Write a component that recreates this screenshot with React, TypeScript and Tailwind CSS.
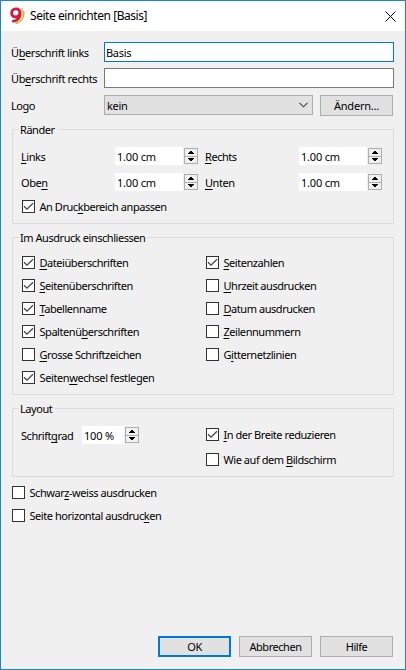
import React from "react";

/** Label whose access key is marked with an ampersand, e.g. "&Links". */
function Key({ text, className = "" }: { text: string; className?: string }) {
  const at = text.indexOf("&");
  if (at < 0) return <span className={"whitespace-pre " + className}>{text}</span>;
  return (
    <span className={"whitespace-pre " + className}>
      {text.slice(0, at)}
      <span className="underline decoration-1 underline-offset-2 [text-decoration-skip-ink:none]">{text[at + 1]}</span>
      {text.slice(at + 2)}
    </span>
  );
}

function Check({ text, on = false, className = "" }: { text: string; on?: boolean; className?: string }) {
  return (
    <label className="flex h-[13px] items-center gap-[4.5px]">
      <span className="flex h-[13px] w-[13px] shrink-0 border border-[#333] bg-white">
        {on && (
          <svg width="11" height="11" viewBox="0 0 11 11" fill="none" stroke="#444" strokeWidth="1.3">
            <path d="M1 5.2 L4 8.2 L10 2.2" />
          </svg>
        )}
      </span>
      <Key text={text} className={className} />
    </label>
  );
}

function Spin({ value, narrow = false }: { value: string; narrow?: boolean }) {
  return (
    <div className="flex h-[18px] items-center gap-px">
      <div className={"flex h-[18px] items-center bg-white pt-px pl-[2px] " + (narrow ? "w-[42px]" : "w-[68px]")}>
        <span className="whitespace-pre tracking-[-0.2px]">{value}</span>
      </div>
      <svg width="14" height="16" viewBox="0 0 14 16" shapeRendering="crispEdges">
        <rect width="14" height="16" fill="#adadad" />
        <rect x="1" y="1" width="12" height="7" fill="#f0f0f0" />
        <rect x="1" y="9" width="12" height="6" fill="#f0f0f0" />
        <path d="M6 3h2v1h1v1h1v1H4V5h1V4h1z M4 10h6v1H9v1H8v1H6v-1H5v-1H4z" fill="#000" />
      </svg>
    </div>
  );
}

function Group({ title, className, children }: { title: string; className: string; children: React.ReactNode }) {
  return (
    <section className={"ml-[11px] w-[382px] border border-[#dcdcdc] " + className}>
      <div className="-mt-[8px] ml-[6px] flex h-4 w-fit items-center bg-[#f0f0f0] pl-px pr-[3px]">
        <span>{title}</span>
      </div>
      {children}
    </section>
  );
}

function Button({ text, primary = false, className = "" }: { text: string; primary?: boolean; className?: string }) {
  return (
    <button
      className={
        "flex h-[21px] w-[73px] shrink-0 items-center justify-center bg-[#e1e1e1] " +
        (primary ? "border-2 border-[#0078d7] " : "border border-[#adadad] ") +
        className
      }
    >
      {text}
    </button>
  );
}

export default function App() {
  return (
    <main className="flex h-[670px] w-[406px] flex-col overflow-hidden border border-[#1883d7] bg-[#f0f0f0] font-['Noto_Sans',sans-serif] text-[11px] leading-4 tracking-[-0.45px] text-black">
      <header className="flex h-[30px] shrink-0 items-center bg-white pl-[8px] pr-[9px]">
        <svg width="17" height="18" viewBox="0 0 17 18" fill="none">
          <path d="M12.8 1c4.700 6 1.600 14-6.300 15.500C10.500 13.500 13 8 12.800 1z" fill="#f0dc8c" stroke="#e3c964" strokeWidth="1" />
          <path d="M14.600 4c1.200 5.500-2.200 11.300-7.600 12.600" stroke="#c9a941" strokeWidth="1" />
          <path d="M10.900 6c-.4 2.700-2 3.900-4.400 3.900-2.400 0-3.900-1.400-3.900-3.700 0-2.600 1.700-4.300 4.300-4.300 2.700 0 4.100 1.800 4.100 4.300 0 4.700-2.700 8-7.800 8.100" stroke="#d71940" strokeWidth="2.8" />
        </svg>
        <span className="ml-1 flex-1 text-[12px]">Seite einrichten [Basis]</span>
        <svg width="11" height="11" viewBox="0 0 11 11" stroke="#000" strokeWidth="1">
          <path d="M.5.5l10 10M10.5.5l-10 10" />
        </svg>
      </header>

      <div className="mt-[11px] flex h-5 items-center pl-[10px]">
        <Key text="Ü&berschrift links" className="mt-0.5 w-[93px] tracking-[-0.4px]" />
        <div className="flex h-5 w-[290px] items-center border border-[#0078d7] bg-white pl-px pt-0.5 tracking-[-0.3px]">Basis</div>
      </div>
      <div className="mt-[6px] flex h-5 items-center pl-[10px]">
        <Key text="Üb&erschrift rechts" className="mt-0.5 w-[93px] tracking-[-0.36px]" />
        <div className="h-5 w-[290px] border border-[#7a7a7a] bg-white" />
      </div>
      <div className="mt-[7px] flex h-[21px] items-start pl-[10px]">
        <span className="mt-[3px] w-[93px]">Logo</span>
        <div className="mr-[7px] flex h-5 w-[209px] items-center justify-between border border-[#adadad] bg-[#e1e1e1] pl-[2px] pr-[4px]">
          <span className="mt-0.5 tracking-[-0.3px]">kein</span>
          <svg width="9" height="6" viewBox="0 0 9 6" fill="none" stroke="#444" strokeWidth="1.1">
            <path d="M.5.8l4 4 4-4" />
          </svg>
        </div>
        <Button text="Ändern..." className="tracking-[-0.2px]" />
      </div>

      <Group title="Ränder" className="mt-[13px] h-[95px]">
        <div className="mt-[9px] grid grid-cols-[94px_90px_94px_auto] gap-y-2 pl-[8px]">
          <Key text="&Links" className="mt-0.5" />
          <Spin value="1.00 cm" />
          <Key text="&Rechts" className="mt-0.5" />
          <Spin value="1.00 cm" />
          <Key text="Obe&n" className="mt-0.5" />
          <Spin value="1.00 cm" />
          <Key text="&Unten" className="mt-0.5" />
          <Spin value="1.00 cm" />
        </div>
        <div className="mt-[9px] pl-[9px]">
          <Check on text="An Druc&kbereich anpassen" />
        </div>
      </Group>

      <Group title="Im Ausdruck einschliessen" className="mt-[13px] h-[158px]">
        <div className="mt-[10px] grid grid-flow-col grid-cols-[184px_auto] grid-rows-6 gap-y-[10px] pl-[9px]">
          <Check on text="&Dateiüberschriften" />
          <Check on text="&Seitenüberschriften" />
          <Check on text="&Tabellenname" />
          <Check on text="Spaltenü&berschriften" />
          <Check text="&Grosse Schriftzeichen" />
          <Check on text="Seiten&wechsel festlegen" className="tracking-[-0.4px]" />
          <Check on text="&Seitenzahlen" />
          <Check text="&Uhrzeit ausdrucken" />
          <Check text="&Datum ausdrucken" />
          <Check text="&Zeilennummern" />
          <Check text="G&itternetzlinien" />
        </div>
      </Group>

      <Group title="Layout" className="mt-[13px] h-[69px]">
        <div className="mt-[9px] flex items-start pl-[8px]">
          <Key text="Schrift&grad" className="mt-0.5 w-[61px]" />
          <Spin value="100 %" narrow />
          <div className="ml-[67px] mt-[2px] flex flex-col gap-3">
            <Check on text="&In der Breite reduzieren" />
            <Check text="Wie auf dem &Bildschirm" />
          </div>
        </div>
      </Group>

      <div className="mt-[9px] flex flex-col gap-[10px] pl-[11px]">
        <Check text="Schwar&z-weiss ausdrucken" />
        <Check text="Seite horizontal ausdruc&ken" />
      </div>

      <footer className="mb-3 mr-3 mt-auto flex justify-end gap-2">
        <Button primary text="OK" />
        <Button text="Abbrechen" />
        <Button text="Hilfe" />
      </footer>
    </main>
  );
}
